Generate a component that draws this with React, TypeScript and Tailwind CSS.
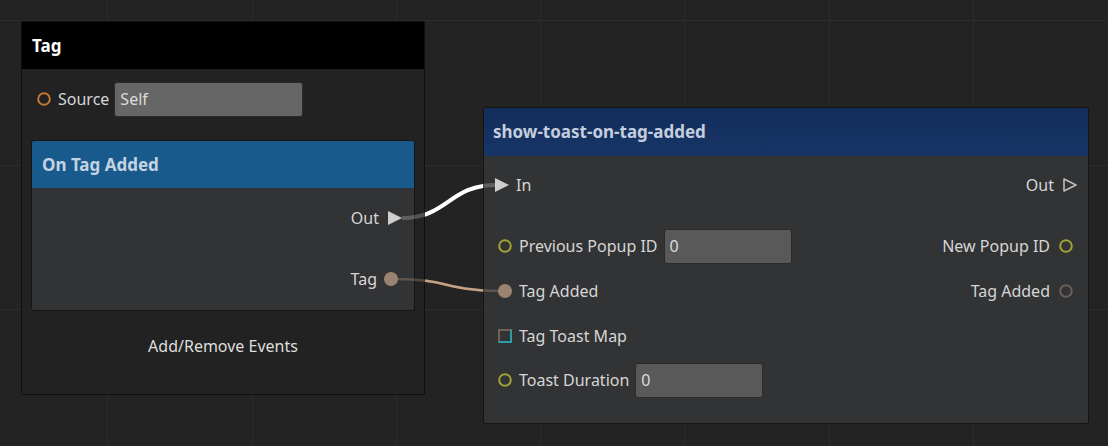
import type { ReactNode } from "react";

const font = { fontFamily: '"Noto Sans", "Open Sans", sans-serif' };

const gridX = [107, 252, 396, 540, 684, 829, 973];
const gridY = [20, 165, 309];

function Ring({ color }: { color: string }) {
  return (
    <svg width="14" height="14" viewBox="0 0 14 14" className="shrink-0">
      <circle cx="7" cy="7" r="5.8" fill="none" stroke={color} strokeWidth="2" />
    </svg>
  );
}

function Dot({ color }: { color: string }) {
  return (
    <svg width="16" height="16" viewBox="0 0 16 16" className="shrink-0">
      <circle cx="8" cy="8" r="7" fill={color} />
    </svg>
  );
}

function Play({ filled }: { filled: boolean }) {
  return (
    <svg width="16" height="16" viewBox="0 0 16 16" className="shrink-0">
      {filled ? (
        <path d="M1 1 L15 8 L1 15 Z" fill="#cfcfcf" />
      ) : (
        <path d="M2 2 L14 8 L2 14 Z" fill="none" stroke="#bdbdbd" strokeWidth="1.6" strokeLinejoin="round" />
      )}
    </svg>
  );
}

function Field({ value, width, bg }: { value: string; width: string; bg: string }) {
  return (
    <div
      className={`${width} ${bg} h-[35px] rounded-[3px] border border-[#2b2b2b] flex items-center px-[5px] text-[16px] text-[#dcdcdc]`}
    >
      {value}
    </div>
  );
}

function Row({ children, className = "" }: { children: ReactNode; className?: string }) {
  return <div className={`h-[36px] flex items-center ${className}`}>{children}</div>;
}

export default function App() {
  return (
    <div
      className="relative w-[1108px] h-[446px] overflow-hidden bg-[#232323] text-[#d6d6d6]"
      style={font}
    >
      {/* canvas grid */}
      <svg className="absolute inset-0" width="1108" height="446">
        {gridX.map((x) => (
          <line key={x} x1={x + 0.5} y1="0" x2={x + 0.5} y2="446" stroke="#2d2d27" strokeWidth="1" />
        ))}
        {gridY.map((y) => (
          <line key={y} x1="0" y1={y + 0.5} x2="1108" y2={y + 0.5} stroke="#2d2d27" strokeWidth="1" />
        ))}
      </svg>

      {/* Tag node */}
      <div className="absolute left-[21px] top-[21px] w-[404px] h-[374px] bg-[#222222] border border-[#0e0e0e] rounded-[2px] flex flex-col">
        <div className="h-[47px] bg-black flex items-center pl-[10px] text-[17px] font-bold text-white">
          Tag
        </div>
        <div className="flex flex-col px-[9px] pt-[12px]">
          <Row className="pl-[6px]">
            <Ring color="#c27733" />
            <span className="ml-[7px] text-[16px]">Source</span>
            <div className="ml-[5px]">
              <Field value="Self" width="w-[189px]" bg="bg-[#666666]" />
            </div>
          </Row>

          <div className="mt-[23px] h-[171px] bg-[#323335] border border-[#141414] rounded-[3px] overflow-hidden flex flex-col">
            <div className="h-[47px] bg-[#185a8b] flex items-center pl-[10px] text-[17px] font-bold text-[#c3d3e2]">
              On Tag Added
            </div>
            <div className="flex flex-col pt-[12px] pr-[11px]">
              <Row className="justify-end">
                <span className="text-[16px] mr-[8px]">Out</span>
                <Play filled />
              </Row>
              <Row className="justify-end mt-[25px] pr-[4px]">
                <span className="text-[16px] mr-[6px]">Tag</span>
                <Dot color="#9b8371" />
              </Row>
            </div>
          </div>

          <div className="mt-[23px] flex justify-center text-[16px] text-[#dedede]">Add/Remove Events</div>
        </div>
      </div>

      {/* show-toast-on-tag-added node */}
      <div className="absolute left-[483px] top-[107px] w-[606px] h-[317px] bg-[#323335] border border-[#141414] rounded-[3px] overflow-hidden flex flex-col">
        <div className="h-[48px] bg-gradient-to-b from-[#132d5c] to-[#163566] flex items-center pl-[9px] text-[17px] font-bold text-[#c4cedc]">
          show-toast-on-tag-added
        </div>
        <div className="flex flex-col pt-[11px]">
          <Row className="justify-between pl-[10px] pr-[10px]">
            <div className="flex items-center">
              <Play filled />
              <span className="ml-[6px] text-[16px]">In</span>
            </div>
            <div className="flex items-center">
              <span className="mr-[8px] text-[16px]">Out</span>
              <Play filled={false} />
            </div>
          </Row>

          <Row className="justify-between mt-[25px] pl-[14px] pr-[15px]">
            <div className="flex items-center">
              <Ring color="#a3a335" />
              <span className="ml-[7px] text-[16px]">Previous Popup ID</span>
              <div className="ml-[6px]">
                <Field value="0" width="w-[128px]" bg="bg-[#595959]" />
              </div>
            </div>
            <div className="flex items-center">
              <span className="mr-[9px] text-[16px]">New Popup ID</span>
              <Ring color="#a3a335" />
            </div>
          </Row>

          <Row className="justify-between mt-[9px] pl-[13px] pr-[15px]">
            <div className="flex items-center">
              <Dot color="#9b8371" />
              <span className="ml-[6px] text-[16px]">Tag Added</span>
            </div>
            <div className="flex items-center">
              <span className="mr-[9px] text-[16px]">Tag Added</span>
              <Ring color="#6c6158" />
            </div>
          </Row>

          <Row className="mt-[9px] pl-[14px]">
            <div className="w-[14px] h-[14px] border-2 border-t-[#6e6157] border-l-[#6e6157] border-b-[#2d9fa8] border-r-[#2d9fa8]" />
            <span className="ml-[7px] text-[16px]">Tag Toast Map</span>
          </Row>

          <Row className="mt-[8px] pl-[14px]">
            <Ring color="#a3a335" />
            <span className="ml-[7px] text-[16px]">Toast Duration</span>
            <div className="ml-[6px]">
              <Field value="0" width="w-[128px]" bg="bg-[#595959]" />
            </div>
          </Row>
        </div>
      </div>

      {/* links */}
      <svg className="absolute inset-0 pointer-events-none" width="1108" height="446">
        <defs>
          <clipPath id="gap">
            <rect x="425" y="0" width="58" height="446" />
          </clipPath>
        </defs>
        <path d="M402 218 C 448 218, 449 185, 496 185" fill="none" stroke="rgba(255,255,255,0.22)" strokeWidth="4" />
        <path d="M402 218 C 448 218, 449 185, 496 185" fill="none" stroke="#ffffff" strokeWidth="4" clipPath="url(#gap)" />
        <path d="M397 279 C 445 279, 450 291, 499 291" fill="none" stroke="rgba(196,162,131,0.3)" strokeWidth="2.5" />
        <path d="M397 279 C 445 279, 450 291, 499 291" fill="none" stroke="#c4a283" strokeWidth="2.5" clipPath="url(#gap)" />
      </svg>
    </div>
  );
}
